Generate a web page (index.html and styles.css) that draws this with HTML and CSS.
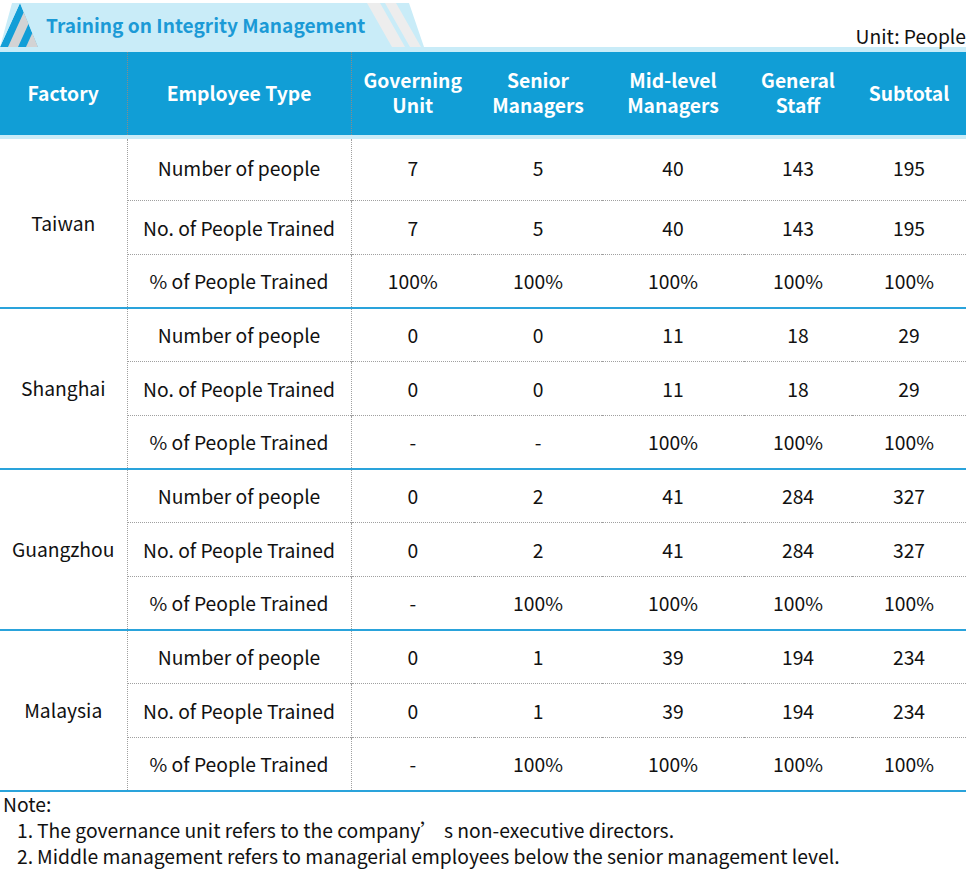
FILE: index.html
```html
<!DOCTYPE html>
<html>
<head>
<meta charset="utf-8">
<link rel="stylesheet" href="styles.css">
</head>
<body>
<div class="top">
  <div class="banner">
    <svg class="banner-bg" width="424" height="44" viewBox="0 0 424 44">
      <defs>
        <clipPath id="tri"><polygon points="20,0 0,44 38,44"/></clipPath>
        <clipPath id="ban"><polygon points="12,0 409,0 424,44 0,44"/></clipPath>
      </defs>
      <polygon points="12,0 409,0 424,44 0,44" fill="#c9ecf8"/>
      <g clip-path="url(#ban)" fill="#ededed">
        <polygon points="367,0 380,0 405,44 392,44"/>
        <polygon points="385,0 396,0 421,44 410,44"/>
      </g>
      <g clip-path="url(#tri)">
        <polygon points="20,0 0,44 38,44" fill="#129ed7"/>
        <polygon points="8,44 18,44 38,0 28,0" fill="#d3d3d4"/>
        <polygon points="26,44 70,44 90,0 46,0" fill="#d3d3d4"/>
      </g>
    </svg>
    <span class="title">Training on Integrity Management</span>
  </div>
  <div class="unit">Unit: People</div>
</div>
<table class="data">
  <colgroup>
    <col class="c1"><col class="c2"><col class="c3"><col class="c4"><col class="c5"><col class="c6"><col class="c7">
  </colgroup>
  <thead>
    <tr>
      <th class="vl">Factory</th>
      <th class="vl">Employee Type</th>
      <th>Governing<br>Unit</th>
      <th>Senior<br>Managers</th>
      <th>Mid-level<br>Managers</th>
      <th>General<br>Staff</th>
      <th>Subtotal</th>
    </tr>
  </thead>
  <tbody>
    <tr class="first">
      <td rowspan="3" class="fac vl">Taiwan</td>
      <td class="vl">Number of people</td><td>7</td><td>5</td><td>40</td><td>143</td><td>195</td>
    </tr>
    <tr><td class="vl">No. of People Trained</td><td>7</td><td>5</td><td>40</td><td>143</td><td>195</td></tr>
    <tr class="last"><td class="vl">% of People Trained</td><td>100%</td><td>100%</td><td>100%</td><td>100%</td><td>100%</td></tr>

    <tr>
      <td rowspan="3" class="fac vl">Shanghai</td>
      <td class="vl">Number of people</td><td>0</td><td>0</td><td>11</td><td>18</td><td>29</td>
    </tr>
    <tr><td class="vl">No. of People Trained</td><td>0</td><td>0</td><td>11</td><td>18</td><td>29</td></tr>
    <tr class="last"><td class="vl">% of People Trained</td><td>-</td><td>-</td><td>100%</td><td>100%</td><td>100%</td></tr>

    <tr>
      <td rowspan="3" class="fac vl">Guangzhou</td>
      <td class="vl">Number of people</td><td>0</td><td>2</td><td>41</td><td>284</td><td>327</td>
    </tr>
    <tr><td class="vl">No. of People Trained</td><td>0</td><td>2</td><td>41</td><td>284</td><td>327</td></tr>
    <tr class="last"><td class="vl">% of People Trained</td><td>-</td><td>100%</td><td>100%</td><td>100%</td><td>100%</td></tr>

    <tr>
      <td rowspan="3" class="fac vl">Malaysia</td>
      <td class="vl">Number of people</td><td>0</td><td>1</td><td>39</td><td>194</td><td>234</td>
    </tr>
    <tr><td class="vl">No. of People Trained</td><td>0</td><td>1</td><td>39</td><td>194</td><td>234</td></tr>
    <tr class="last"><td class="vl">% of People Trained</td><td>-</td><td>100%</td><td>100%</td><td>100%</td><td>100%</td></tr>
  </tbody>
</table>
<div class="notes">
  <div class="note-title">Note:</div>
  <ol class="note-list">
    <li><span class="num">1.</span>The governance unit refers to the company’ s non-executive directors.</li>
    <li><span class="num">2.</span>Middle management refers to managerial employees below the senior management level.</li>
  </ol>
</div>
</body>
</html>
```
FILE: styles.css
```css
* { box-sizing: border-box; }
html, body {
  margin: 0;
  padding: 0;
  background: #fff;
}
body {
  width: 966px;
  font-family: "Noto Sans CJK TC", "Noto Sans", sans-serif;
  font-size: 19.3px;
  color: #111;
}
.top {
  display: flex;
  justify-content: space-between;
  align-items: flex-end;
  height: 47px;
}
.banner {
  position: relative;
  width: 424px;
  height: 44px;
  display: flex;
  align-items: center;
}
.banner-bg {
  position: absolute;
  left: 0;
  top: 0;
}
.title {
  position: relative;
  padding-left: 46px;
  font-weight: bold;
  font-size: 19.1px;
  color: #1b9ad6;
  line-height: 44px;
}
.unit {
  font-size: 19.3px;
  line-height: 24px;
  margin-bottom: -1px;
}
.data {
  width: 966px;
  border-collapse: collapse;
  table-layout: fixed;
}
.c1 { width: 127px; }
.c2 { width: 224px; }
.c3 { width: 123px; }
.c4 { width: 128px; }
.c5 { width: 142px; }
.c6 { width: 108px; }
.c7 { width: 114px; }
.data thead tr {
  border-top: 5px solid #c9ecf8;
  border-bottom: 4px solid #c9ecf8;
}
.data th {
  background: #119ed6;
  color: #fff;
  font-weight: bold;
  font-size: 19.3px;
  line-height: 25px;
  height: 87px;
  padding: 0;
  text-align: center;
}
.data th.vl { border-right: 1px dotted #8a8a8a; }
.data td {
  height: 54px;
  padding: 0;
  text-align: center;
  line-height: 24px;
  border-top: 1px dotted #a0a0a0;
}
.data td.vl { border-right: 1px dotted #a0a0a0; }
.data tr.first td { height: 64px; border-top: none; padding-bottom: 3px; }
.data tr.first td.fac { padding-bottom: 0; }
.data tr.last td { height: 53px; border-bottom: 2px solid #2aa3db; }
.data td.fac { border-bottom: 2px solid #2aa3db; }
.notes {
  margin-top: -1px;
  line-height: 26.4px;
  font-size: 19.3px;
}
.note-title { padding-left: 3px; }
.note-list {
  list-style: none;
  margin: 0;
  padding: 0 0 0 17px;
}
.num { margin-right: 4px; }
```
